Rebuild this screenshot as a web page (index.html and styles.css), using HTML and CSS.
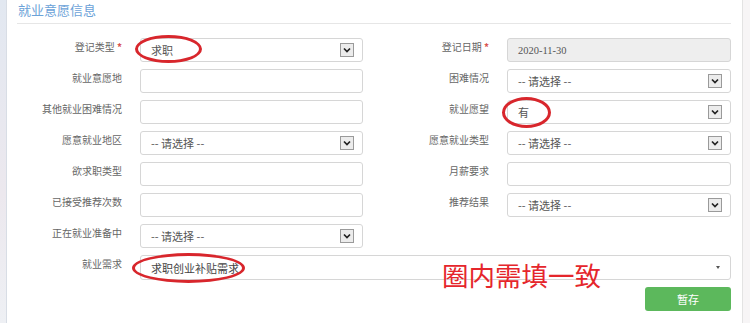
FILE: index.html
```html
<!DOCTYPE html>
<html lang="zh-CN">
<head>
  <meta charset="UTF-8" />
  <title>就业意愿信息</title>
  <link rel="stylesheet" href="styles.css">
</head>
<body>

<div class="page">
  <div class="side side-left"></div>

  <div class="panel">
    <h3 class="title">就业意愿信息</h3>

    <div class="form-grid">
      <label class="lbl">登记类型 <i class="req">*</i></label>
      <div class="field select">
        <span class="val">求职</span>
        <span class="arrow"><svg width="12" height="12" viewBox="0 0 12 12"><polyline points="3,4.5 6,7.5 9,4.5" /></svg></span>
      </div>
      <label class="lbl">登记日期 <i class="req">*</i></label>
      <div class="field readonly">2020-11-30</div>

      <label class="lbl">就业意愿地</label>
      <div class="field"></div>
      <label class="lbl">困难情况</label>
      <div class="field select">
        <span class="val">-- 请选择 --</span>
        <span class="arrow"><svg width="12" height="12" viewBox="0 0 12 12"><polyline points="3,4.5 6,7.5 9,4.5" /></svg></span>
      </div>

      <label class="lbl">其他就业困难情况</label>
      <div class="field"></div>
      <label class="lbl">就业愿望</label>
      <div class="field select">
        <span class="val">有</span>
        <span class="arrow"><svg width="12" height="12" viewBox="0 0 12 12"><polyline points="3,4.5 6,7.5 9,4.5" /></svg></span>
      </div>

      <label class="lbl">愿意就业地区</label>
      <div class="field select">
        <span class="val">-- 请选择 --</span>
        <span class="arrow"><svg width="12" height="12" viewBox="0 0 12 12"><polyline points="3,4.5 6,7.5 9,4.5" /></svg></span>
      </div>
      <label class="lbl">愿意就业类型</label>
      <div class="field select">
        <span class="val">-- 请选择 --</span>
        <span class="arrow"><svg width="12" height="12" viewBox="0 0 12 12"><polyline points="3,4.5 6,7.5 9,4.5" /></svg></span>
      </div>

      <label class="lbl">欲求职类型</label>
      <div class="field"></div>
      <label class="lbl">月薪要求</label>
      <div class="field"></div>

      <label class="lbl">已接受推荐次数</label>
      <div class="field"></div>
      <label class="lbl">推荐结果</label>
      <div class="field select">
        <span class="val">-- 请选择 --</span>
        <span class="arrow"><svg width="12" height="12" viewBox="0 0 12 12"><polyline points="3,4.5 6,7.5 9,4.5" /></svg></span>
      </div>

      <label class="lbl">正在就业准备中</label>
      <div class="field select">
        <span class="val">-- 请选择 --</span>
        <span class="arrow"><svg width="12" height="12" viewBox="0 0 12 12"><polyline points="3,4.5 6,7.5 9,4.5" /></svg></span>
      </div>

      <label class="lbl lbl-first">就业需求</label>
      <div class="field wide">
        <span class="val">求职创业补贴需求</span>
        <span class="caret"></span>
      </div>
    </div>

    <div class="actions">
      <button class="btn-save">暂存</button>
    </div>
  </div>

  <div class="side side-right"></div>

  <!-- hand-drawn annotations -->
  <span class="mark mark-type"></span>
  <span class="mark mark-wish"></span>
  <span class="mark mark-need"></span>
  <div class="note">圈内需填一致</div>
</div>

</body>
</html>
```

FILE: styles.css
```css
* {
  margin: 0;
  padding: 0;
  box-sizing: border-box;
}

body {
  font-family: "Noto Sans CJK SC", "Noto Sans", sans-serif;
  background-color: #fff;
  color: #555;
}

.page {
  position: relative;
  display: flex;
  height: 323px;
  overflow: hidden;
}

.side-left {
  width: 7px;
  background: linear-gradient(#e2e8f1, #ece8ee 60%, #eef0f4);
  border-right: 1px solid #d8dde5;
}

.side-right {
  flex: 1;
  background-color: #f7f5f6;
  border-left: 1px solid #e3e3e3;
}

.panel {
  width: 735px;
  padding: 0 11px 0 10px;
  background-color: #fff;
}

.title {
  padding: 1px 0 4px 1px;
  line-height: 18px;
  font-size: 13px;
  font-weight: normal;
  color: #6ba2d8;
  border-bottom: 1px solid #e6e6e6;
}

.form-grid {
  display: grid;
  grid-template-columns: 105px 223px 108px 224px;
  column-gap: 18px;
  row-gap: 7px;
  margin-top: 14px;
}

.lbl {
  text-align: right;
  font-size: 10px;
  line-height: 14px;
  padding-top: 2px;
  color: #666;
}

.lbl-first {
  grid-column: 1;
}

.req {
  font-style: normal;
  color: #d9534f;
  font-weight: bold;
}

.field {
  display: flex;
  align-items: center;
  height: 24px;
  padding: 0 8px 0 10px;
  border: 1px solid #d6d6d6;
  border-radius: 3px;
  background-color: #fff;
  font-size: 11px;
  color: #555;
}

.field .val {
  flex: 1;
}

.readonly {
  background-color: #eee;
  font-family: "Liberation Serif", serif;
  font-size: 10.5px;
  color: #555;
}

.arrow {
  display: flex;
  align-items: center;
  justify-content: center;
  width: 14px;
  height: 14px;
  border: 1px solid #9a9a9a;
  background-color: #ececec;
}

.arrow polyline {
  fill: none;
  stroke: #222;
  stroke-width: 1.7;
}

.wide {
  grid-column: 2 / 5;
  height: 25px;
  padding-right: 10px;
  color: #444;
}

.caret {
  width: 0;
  height: 0;
  border-left: 2.5px solid transparent;
  border-right: 2.5px solid transparent;
  border-top: 3px solid #555;
}

.actions {
  display: flex;
  justify-content: flex-end;
  margin-top: 7px;
}

.btn-save {
  width: 86px;
  height: 24px;
  border: none;
  border-radius: 3px;
  background-color: #5cb85c;
  color: #fff;
  font-family: inherit;
  font-size: 11px;
}

/* red marks drawn over the screenshot */
.mark {
  position: absolute;
  border: 3px solid #d8262c;
  border-radius: 50%;
}

.mark-type {
  left: 135px;
  top: 35px;
  width: 67px;
  height: 28px;
}

.mark-wish {
  left: 502px;
  top: 97px;
  width: 49px;
  height: 31px;
}

.mark-need {
  left: 132px;
  top: 253px;
  width: 113px;
  height: 30px;
}

.note {
  position: absolute;
  left: 442px;
  top: 257px;
  font-size: 26.5px;
  line-height: 36px;
  color: #e5262c;
}
```
